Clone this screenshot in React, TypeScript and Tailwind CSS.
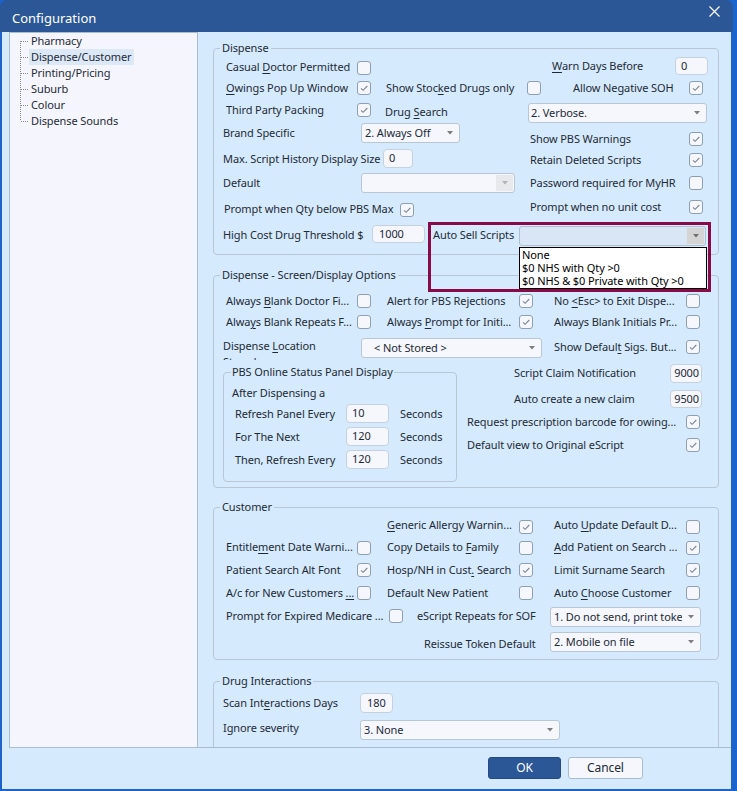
import React from 'react';

type P = { c?: string; children?: React.ReactNode };

const U = ({ children }: P) => <span className="underline underline-offset-[2px]">{children}</span>;

const L = ({ c = '', children }: P) => (
  <div className={`shrink-0 whitespace-nowrap h-4 leading-4 ${c}`}>{children}</div>
);

const Cb = ({ on, c = '' }: { on?: boolean; c?: string }) => (
  <div className={`shrink-0 w-[14px] h-[14px] rounded-[3px] border border-[#8d9fb3] bg-[#f5f7fd] flex items-center justify-center ${c}`}>
    {on && (
      <svg width="10" height="10" viewBox="0 0 10 10" fill="none">
        <path d="M2 5.3 L4.1 7.3 L8.3 3" stroke="#7b8794" strokeWidth="1.1" />
      </svg>
    )}
  </div>
);

const Inp = ({ c = '', children }: P) => (
  <div className={`shrink-0 rounded-[4px] border border-[#c5d1de] bg-[#f5f7fd] flex items-center ${c}`}>{children}</div>
);

const Arrow = ({ color = '#7d7d7d' }: { color?: string }) => (
  <svg width="6" height="4" viewBox="0 0 6 4">
    <path d="M0 0 H6 L3 3.5 Z" fill={color} />
  </svg>
);

const Sel = ({ v = '', c = '', kind = 'normal' }: { v?: string; c?: string; kind?: 'normal' | 'disabled' | 'focus' }) => (
  <div
    className={`shrink-0 h-[20px] rounded-[3px] border flex items-center overflow-hidden ${
      kind === 'focus' ? 'bg-[#d8e6f5] border-[#aebfd1]' : 'bg-[#f5f7fd] border-[#b9c6d4]'
    } ${c}`}
  >
    <span className="flex-1 whitespace-nowrap overflow-hidden leading-[18px]">{v}</span>
    {kind === 'normal' ? (
      <span className="w-[18px] shrink-0 flex justify-center">
        <Arrow />
      </span>
    ) : (
      <span className={`w-[17px] h-[16px] mr-[1px] shrink-0 flex items-center justify-center ${kind === 'focus' ? 'bg-[#d4d4d4]' : 'bg-[#e8e9ec]'}`}>
        <Arrow color={kind === 'focus' ? '#6f6f6f' : '#b4b4b4'} />
      </span>
    )}
  </div>
);

const Tree = () => {
  const items = ['Pharmacy', 'Dispense/Customer', 'Printing/Pricing', 'Suburb', 'Colour', 'Dispense Sounds'];
  return (
    <div className="pl-[10px] pt-0">
      {items.map((t, i) => (
        <div key={t} className="flex items-center h-4">
          <svg width="9" height="16" viewBox="0 0 9 16" className="shrink-0" shapeRendering="crispEdges">
            <line x1="0.5" y1={i === 0 ? 8 : 0} x2="0.5" y2={i === items.length - 1 ? 8 : 16} stroke="#8a8a8a" strokeDasharray="1 1" />
            <line x1="1" y1="8.5" x2="9" y2="8.5" stroke="#8a8a8a" strokeDasharray="1 1" />
          </svg>
          <div className={`h-4 leading-4 pl-[2px] pr-[3px] whitespace-nowrap ${i === 1 ? 'bg-[#dde8f6]' : ''}`}>{t}</div>
        </div>
      ))}
    </div>
  );
};

const Dispense = () => (
  <fieldset className="ml-[15px] mt-[8px] w-[506px] rounded-[4px] border border-[#b7c7d6] pb-[6px]">
    <legend className="ml-[6px] px-[2px] h-4 leading-4">Dispense</legend>
    <div className="flex items-start h-[21px]">
      <L c="ml-[12px] w-[131px] mt-[3px]">Casual <U>D</U>octor Permitted</L>
      <Cb c="mt-[5px]" />
      <L c="ml-[181px] w-[123px] mt-[2px]"><U>W</U>arn Days Before</L>
      <Inp c="w-[33px] h-[18px] mt-[1px] pl-[5px]">0</Inp>
    </div>
    <div className="flex items-start h-[22px]">
      <L c="ml-[12px] w-[131px] mt-[3px]"><U>O</U>wings Pop Up Window</L>
      <Cb on c="mt-[4px]" />
      <L c="ml-[15px] w-[141px] mt-[3px]">Show Stoc<U>k</U>ed Drugs only</L>
      <Cb c="mt-[4px]" />
      <L c="ml-[32px] w-[116px] mt-[3px]">Allow Negative SOH</L>
      <Cb on c="mt-[4px]" />
    </div>
    <div className="flex items-start h-[24px]">
      <L c="ml-[12px] w-[131px] mt-[3px]">Third Party Packing</L>
      <Cb on c="mt-[4px]" />
      <L c="ml-[14px] w-[143px] mt-[5px]">Drug <U>S</U>earch</L>
      <Sel c="w-[179px] mt-[4px] pl-[2px]" v="2. Verbose." />
    </div>
    <div className="flex items-start h-[25px]">
      <L c="ml-[9px] w-[138px] mt-[2px]">Brand Specific</L>
      <Sel c="w-[99px] pl-[3px]" v="2. Always Off" />
      <L c="ml-[70px] w-[159px] mt-[8px]">Show PBS Warnings</L>
      <Cb on c="mt-[9px]" />
    </div>
    <div className="flex items-start h-[22px]">
      <L c="ml-[9px] w-[160px] mt-[3px]">Max. Script History Display Size</L>
      <Inp c="w-[30px] h-[19px] mt-[1px] pl-[5px]">0</Inp>
      <L c="ml-[117px] w-[159px] mt-[4px]">Retain Deleted Scripts</L>
      <Cb on c="mt-[5px]" />
    </div>
    <div className="flex items-start h-[25px]">
      <L c="ml-[9px] w-[138px] mt-[5px]">Default</L>
      <Sel c="w-[154px] mt-[3px]" kind="disabled" />
      <L c="ml-[15px] w-[159px] mt-[5px]">Password required for MyHR</L>
      <Cb c="mt-[6px]" />
    </div>
    <div className="flex items-start h-[24px]">
      <L c="ml-[10px] w-[176px] mt-[6px]">Prompt when Qty below PBS Max</L>
      <Cb on c="mt-[8px]" />
      <L c="ml-[116px] w-[159px] mt-[4px]">Prompt when no unit cost</L>
      <Cb on c="mt-[5px]" />
    </div>
    <div className="flex items-start h-[29px]">
      <L c="ml-[9px] w-[149px] mt-[8px]">High Cost Drug Threshold $</L>
      <Inp c="w-[53px] h-[18px] mt-[6px] pl-[6px]">1000</Inp>
      <div className="relative flex items-start ml-[8px] mt-[7px]">
        <L c="w-[86px] mt-[1px]">Auto Sell Scripts</L>
        <Sel c="w-[187px]" kind="focus" />
        <div className="absolute -left-[5px] -top-[4px] w-[283px] h-[70px] border-[3px] border-[#870b49] pointer-events-none" />
        <div className="absolute left-[86px] top-[21px] z-10 w-[188px] h-[42px] bg-white border border-black text-black pl-[2px]">
          <div className="h-[13px] leading-[13px]">None</div>
          <div className="h-[13px] leading-[13px]">$0 NHS with Qty &gt;0</div>
          <div className="h-[13px] leading-[13px]">$0 NHS &amp; $0 Private with Qty &gt;0</div>
        </div>
      </div>
    </div>
  </fieldset>
);

const ScreenOptions = () => (
  <fieldset className="ml-[15px] mt-[12px] w-[506px] rounded-[4px] border border-[#b7c7d6] pb-[5px]">
    <legend className="ml-[6px] px-[2px] h-4 leading-4">Dispense - Screen/Display Options</legend>
    <div className="pt-[7px]">
      <div className="flex items-start h-[22px]">
        <L c="ml-[12px] w-[131px] mt-[3px]">Always <U>B</U>lank Doctor Fi...</L>
        <Cb c="mt-[4px]" />
        <L c="ml-[16px] w-[132px] mt-[3px]">Alert for PBS Rejections</L>
        <Cb on c="mt-[4px]" />
        <L c="ml-[21px] w-[132px] mt-[3px]">No <U>&lt;</U>Esc&gt; to Exit Dispe...</L>
        <Cb c="mt-[4px]" />
      </div>
      <div className="flex items-start h-[21px]">
        <L c="ml-[12px] w-[131px] mt-[2px]">Alwa<U>y</U>s Blank Repeats F...</L>
        <Cb c="mt-[3px]" />
        <L c="ml-[16px] w-[132px] mt-[2px]">Always <U>P</U>rompt for Initi...</L>
        <Cb on c="mt-[3px]" />
        <L c="ml-[21px] w-[132px] mt-[2px]">Always Blank Initials Pr...</L>
        <Cb c="mt-[3px]" />
      </div>
      <div className="flex items-start h-[29px]">
        <div className="shrink-0 ml-[9px] w-[138px] mt-[5px] h-[22px] overflow-hidden leading-4">
          Dispense <U>L</U>ocation
          <br />
          Stored
        </div>
        <Sel c="w-[181px] mt-[5px] pl-[12px]" v="< Not Stored >" />
        <L c="ml-[12px] w-[132px] mt-[6px]">Show Defaul<U>t</U> Sigs. But...</L>
        <Cb on c="mt-[7px]" />
      </div>
      <div className="flex items-start">
        <fieldset className="ml-[9px] mt-[2px] w-[234px] shrink-0 rounded-[4px] border border-[#b7c7d6] pb-[10px]">
          <legend className="ml-[7px] px-[1px] h-4 leading-4">PBS Online Status Panel Display</legend>
          <div className="h-[22px]">
            <L c="ml-[8px] mt-[5px] inline-block">After Dispensing a</L>
          </div>
          {[
            ['Refresh Panel Every', '10'],
            ['For The Next', '120'],
            ['Then, Refresh Every', '120'],
          ].map(([t, v]) => (
            <div key={t} className="flex items-start h-[23px]">
              <L c="ml-[11px] w-[111px] mt-[4px]">{t}</L>
              <Inp c="w-[43px] h-[19px] mt-[2px] pl-[5px]">{v}</Inp>
              <L c="ml-[11px] mt-[4px]">Seconds</L>
            </div>
          ))}
        </fieldset>
        <div className="flex flex-col">
          <div className="flex items-start h-[24px]">
            <L c="ml-[57px] w-[156px] mt-[3px]">Script Claim Notification</L>
            <Inp c="w-[32px] h-[19px] mt-[2px] justify-end pr-[2px]">9000</Inp>
          </div>
          <div className="flex items-start h-[24px]">
            <L c="ml-[57px] w-[156px] mt-[5px]">Auto create a new claim</L>
            <Inp c="w-[32px] h-[18px] mt-[4px] justify-end pr-[2px]">9500</Inp>
          </div>
          <div className="flex items-start h-[23px]">
            <L c="ml-[10px] w-[219px] mt-[4px]">Request prescription barcode for owing...</L>
            <Cb on c="mt-[5px]" />
          </div>
          <div className="flex items-start h-[23px]">
            <L c="ml-[10px] w-[219px] mt-[4px]">Default view to Original eScript</L>
            <Cb on c="mt-[5px]" />
          </div>
        </div>
      </div>
    </div>
  </fieldset>
);

const Customer = () => (
  <fieldset className="ml-[15px] mt-[11px] w-[506px] rounded-[4px] border border-[#b7c7d6] pb-[5px]">
    <legend className="ml-[6px] px-[2px] h-4 leading-4">Customer</legend>
    <div className="flex items-start h-[22px]">
      <L c="ml-[173px] w-[132px] mt-[2px]"><U>G</U>eneric Allergy Warnin...</L>
      <Cb on c="mt-[5px]" />
      <L c="ml-[21px] w-[132px] mt-[2px]">Auto <U>U</U>pdate Default D...</L>
      <Cb c="mt-[5px]" />
    </div>
    <div className="flex items-start h-[22px]">
      <L c="ml-[12px] w-[131px] mt-[2px]">Entitle<U>m</U>ent Date Warni...</L>
      <Cb c="mt-[4px]" />
      <L c="ml-[16px] w-[132px] mt-[2px]">Copy Details to <U>F</U>amily</L>
      <Cb c="mt-[4px]" />
      <L c="ml-[21px] w-[132px] mt-[2px]"><U>A</U>dd Patient on Search ...</L>
      <Cb on c="mt-[4px]" />
    </div>
    <div className="flex items-start h-[23px]">
      <L c="ml-[12px] w-[131px] mt-[3px]">Patient Search Alt Font</L>
      <Cb on c="mt-[4px]" />
      <L c="ml-[16px] w-[132px] mt-[3px]">Hosp/NH in Cust<U>.</U> Search</L>
      <Cb on c="mt-[4px]" />
      <L c="ml-[21px] w-[132px] mt-[3px]">Limit Surname Search</L>
      <Cb on c="mt-[4px]" />
    </div>
    <div className="flex items-start h-[23px]">
      <L c="ml-[12px] w-[131px] mt-[3px]">A/c for New Customers <U>...</U></L>
      <Cb c="mt-[4px]" />
      <L c="ml-[16px] w-[132px] mt-[3px]">Default New Patient</L>
      <Cb c="mt-[4px]" />
      <L c="ml-[21px] w-[132px] mt-[3px]">Auto <U>C</U>hoose Customer</L>
      <Cb c="mt-[4px]" />
    </div>
    <div className="flex items-start h-[24px]">
      <L c="ml-[12px] w-[163px] mt-[3px]">Prompt for Expired Medicare ...</L>
      <Cb c="mt-[4px]" />
      <L c="ml-[14px] w-[133px] mt-[3px]">eScript Repeats for SOF</L>
      <Sel c="w-[151px] mt-[2px] pl-[3px]" v="1. Do not send, print token" />
    </div>
    <div className="flex items-start h-[25px]">
      <L c="ml-[210px] w-[126px] mt-[7px]">Reissue Token Default</L>
      <Sel c="w-[151px] mt-[3px] pl-[3px]" v="2. Mobile on file" />
    </div>
  </fieldset>
);

const Interactions = () => (
  <fieldset className="ml-[15px] mt-[13px] w-[506px] rounded-[4px] border border-[#b7c7d6] pb-[20px]">
    <legend className="ml-[6px] px-[2px] h-4 leading-4">Drug Interactions</legend>
    <div className="flex items-start h-[27px]">
      <L c="ml-[9px] w-[137px] mt-[6px]">Scan Int<U>e</U>ractions Days</L>
      <Inp c="w-[33px] h-[20px] mt-[4px] pl-[6px]">180</Inp>
    </div>
    <div className="flex items-start h-[28px]">
      <L c="ml-[9px] w-[137px] mt-[4px]">Ignore severity</L>
      <Sel c="w-[200px] mt-[4px] pl-[3px]" v="3. None" />
    </div>
  </fieldset>
);

export default function App() {
  return (
    <div className="w-[737px] h-[791px] bg-[#1a64d0] overflow-hidden font-['Noto_Sans',sans-serif] text-[11px] tracking-[-0.1px] text-[#1e2a36]">
      <div className="w-[733px] h-[791px] rounded-[7px] overflow-hidden bg-[#1f62c8] flex flex-col">
        <div className="h-[32px] shrink-0 bg-[#2b5797] flex items-center pl-[12px] pr-[13px] text-white">
          <div className="text-[13px] tracking-normal pt-[5px] flex-1">Configuration</div>
          <svg width="11" height="11" viewBox="0 0 11 11" className="mb-[10px]">
            <path d="M0.5 0.5 L10.5 10.5 M10.5 0.5 L0.5 10.5" stroke="white" strokeWidth="1.2" />
          </svg>
        </div>
        <div className="flex-1 mx-[2px] mb-[2px] bg-[#d5eafc] flex flex-col">
          <div className="flex h-[716px] ml-[7px] border-b border-[#a9bcd1]">
            <div className="w-[189px] shrink-0 bg-[#f5f6fd] border-l border-t border-r border-[#a9bcd1]">
              <Tree />
            </div>
            <div className="flex-1 relative overflow-hidden">
              <Dispense />
              <ScreenOptions />
              <Customer />
              <Interactions />
            </div>
          </div>
          <div className="flex items-start">
            <button className="ml-[486px] mt-[9px] w-[73px] h-[22px] rounded-[3px] bg-[#2b5797] border border-[#234a86] text-white text-[12px]">OK</button>
            <button className="ml-[7px] mt-[9px] w-[75px] h-[22px] rounded-[3px] bg-[#f5f7fd] border border-[#a9bcd1] text-[12px]">Cancel</button>
          </div>
        </div>
      </div>
    </div>
  );
}
